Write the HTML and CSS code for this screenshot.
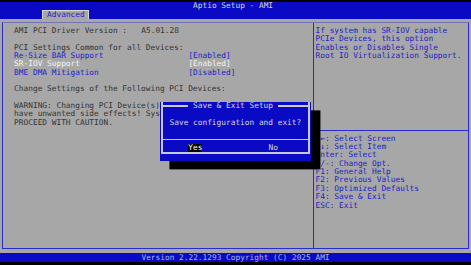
FILE: index.html
```html
<!doctype html>
<html>
<head>
<meta charset="utf-8">
<title>Aptio Setup - AMI</title>
<link rel="stylesheet" href="styles.css">
</head>

<body>
<div class="screen">
	<div class="top">
		<div class="title">Aptio Setup - AMI</div>
		<div class="tabs"><span class="tab">Advanced</span></div>
	</div>
	<div class="body">
		<div class="frame">
			<div class="left">
				<div class="row"><span class="lbl lbl-short">AMI PCI Driver Version :</span>A5.01.28</div>
				<div class="row"></div>
				<div class="row">PCI Settings Common for all Devices:</div>
				<div class="row opt"><span class="lbl">Re-Size BAR Support</span>[Enabled]</div>
				<div class="row opt on"><span class="lbl">SR-IOV Support</span>[Enabled]</div>
				<div class="row opt"><span class="lbl">BME DMA Mitigation</span>[Disabled]</div>
				<div class="row"></div>
				<div class="row">Change Settings of the Following PCI Devices:</div>
				<div class="row"></div>
				<div class="row">WARNING: Changing PCI Device(s)</div>
				<div class="row">have unwanted side effects! Sys</div>
				<div class="row">PROCEED WITH CAUTION.</div>
			</div>
			<div class="right">
				<div class="help">
					<div class="row">If system has SR-IOV capable</div>
					<div class="row">PCIe Devices, this option</div>
					<div class="row">Enables or Disables Single</div>
					<div class="row">Root IO Virtualization Support.</div>
				</div>
				<div class="keys">
					<div class="row">&rarr;&larr;: Select Screen</div>
					<div class="row">&uarr;&darr;: Select Item</div>
					<div class="row">Enter: Select</div>
					<div class="row">+/-: Change Opt.</div>
					<div class="row">F1: General Help</div>
					<div class="row">F2: Previous Values</div>
					<div class="row">F3: Optimized Defaults</div>
					<div class="row">F4: Save &amp; Exit</div>
					<div class="row">ESC: Exit</div>
				</div>
			</div>
		</div>
	</div>
	<div class="foot">Version 2.22.1293 Copyright (C) 2025 AMI</div>

	<div class="dialog">
		<div class="dlg-box">
			<div class="dlg-title"><span>Save &amp; Exit Setup</span></div>
			<div class="dlg-msg">Save configuration and exit?</div>
			<div class="dlg-sep"></div>
			<div class="dlg-btns"><span class="btn sel">Yes</span><span class="btn">No</span></div>
		</div>
	</div>
</div>
</body>
</html>
```

FILE: styles.css
```css
:root{ --c:4.71px; --r:8.37px; --blue:#0a0ac4; --gray:#a7a7a7; --line:#2a2ad2; --txt:#333; --link:#2222c8; --edge:#c8c8d0;}
*{ margin:0; padding:0; box-sizing:border-box;}
html,body{ background:#000;}
body{ font-family:"DejaVu Sans Mono", monospace; font-size:7.824px; line-height:var(--r); color:var(--txt);}
.screen{ width:471px; height:265px; padding-top:1.8px; position:relative; overflow:hidden;}
.row{ height:var(--r); white-space:pre;}

.top{ background:var(--blue);}
.title{ height:var(--r); padding-left:calc(41 * var(--c)); color:#d6d6d6; white-space:pre;}
.tabs{ height:var(--r); padding-left:calc(9 * var(--c));}
.tab{ display:inline-block; vertical-align:top; width:calc(10 * var(--c)); height:var(--r); padding-left:calc(1 * var(--c) - 1px); background:var(--gray); color:var(--link); border:1px solid #d8d8d8; border-bottom:none; line-height:calc(var(--r) - 1px);}

.body{ background:var(--gray); height:calc(28 * var(--r)); padding:calc(var(--r) / 2 - 0.5px) calc(var(--c) / 2 - 0.5px);}
.frame{ display:flex; height:100%; border:1px solid var(--line); border-top-color:#7474b4;}
.left{ width:calc(66 * var(--c) - 1px); padding:calc(var(--r) / 2 - 0.5px) 0 0 calc(2.5 * var(--c) - 0.5px);}
.lbl{ display:inline-block; width:calc(37 * var(--c));}
.lbl-short{ width:calc(27 * var(--c));}
.opt{ color:var(--link);}
.opt.on{ color:#f4f4f4;}
.right{ flex:1; border-left:1px solid var(--line); display:flex; flex-direction:column; color:var(--link);}
.help{ height:calc(13 * var(--r) - 1px); border-bottom:1px solid var(--line); padding:calc(var(--r) / 2 - 0.5px) 0 0 calc(var(--c) / 2 - 0.5px);}
.keys{ padding:calc(var(--r) / 2 - 0.5px) 0 0 calc(var(--c) / 2 - 0.5px);}

.foot{ background:var(--blue); height:calc(var(--r) + 1px); text-align:center; color:#b4b4dc; white-space:pre; line-height:calc(var(--r) + 1px);}

/* popup over the page */
.dialog{ position:absolute; left:calc(34 * var(--c)); top:calc(1.8px + 12 * var(--r)); width:calc(32 * var(--c)); height:calc(7 * var(--r)); background:var(--blue); padding:calc(var(--r) / 2 - 1px) calc(var(--c) / 2 - 1px); box-shadow:calc(2 * var(--c)) var(--r) 0 #000; color:#d8d8d8;}
.dlg-box{ height:100%; border:2px solid var(--edge); border-top:none;}
.dlg-title{ display:flex; align-items:center; height:var(--r); margin:calc(var(--r) / -2 + 1px) -2px 0; white-space:pre;}
.dlg-title:before{ content:''; width:calc(5.5 * var(--c) + 1px); border-top:2px solid var(--edge);}
.dlg-title:after{ content:''; flex:1; border-top:2px solid var(--edge);}
.dlg-title span{ padding:0 var(--c);}
.dlg-msg{ height:var(--r); margin-top:var(--r); padding-left:calc(1.5 * var(--c) - 1px); white-space:pre;}
.dlg-sep{ height:var(--r); margin-top:var(--r); display:flex; align-items:center;}
.dlg-sep:before{ content:''; flex:1; border-top:1px solid var(--edge);}
.dlg-btns{ height:var(--r); display:flex; gap:calc(14 * var(--c)); padding-left:calc(5.5 * var(--c) - 1px);}
.btn{ width:calc(3 * var(--c)); white-space:pre;}
.btn.sel{ background:#000; color:#fff;}
```
